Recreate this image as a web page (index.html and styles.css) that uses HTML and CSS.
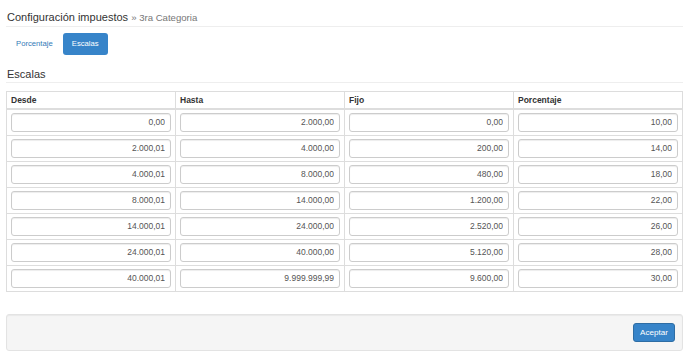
FILE: index.html
```html
<!DOCTYPE html>
<html lang="es">

<head>
    <meta charset="UTF-8" />
    <title>Configuración impuestos</title>
    <link rel="stylesheet" href="styles.css">
</head>

<body>
    <h3 class="page-title">Configuración impuestos <small>» 3ra Categoria</small></h3>

    <ul class="tabs">
        <li><a href="#">Porcentaje</a></li>
        <li class="active"><a href="#">Escalas</a></li>
    </ul>

    <h4 class="section-title">Escalas</h4>

    <table class="scales">
        <thead>
            <tr>
                <th>Desde</th>
                <th>Hasta</th>
                <th>Fijo</th>
                <th>Porcentaje</th>
            </tr>
        </thead>
        <tbody>
            <tr>
                <td><input type="text" value="0,00"></td>
                <td><input type="text" value="2.000,00"></td>
                <td><input type="text" value="0,00"></td>
                <td><input type="text" value="10,00"></td>
            </tr>
            <tr>
                <td><input type="text" value="2.000,01"></td>
                <td><input type="text" value="4.000,00"></td>
                <td><input type="text" value="200,00"></td>
                <td><input type="text" value="14,00"></td>
            </tr>
            <tr>
                <td><input type="text" value="4.000,01"></td>
                <td><input type="text" value="8.000,00"></td>
                <td><input type="text" value="480,00"></td>
                <td><input type="text" value="18,00"></td>
            </tr>
            <tr>
                <td><input type="text" value="8.000,01"></td>
                <td><input type="text" value="14.000,00"></td>
                <td><input type="text" value="1.200,00"></td>
                <td><input type="text" value="22,00"></td>
            </tr>
            <tr>
                <td><input type="text" value="14.000,01"></td>
                <td><input type="text" value="24.000,00"></td>
                <td><input type="text" value="2.520,00"></td>
                <td><input type="text" value="26,00"></td>
            </tr>
            <tr>
                <td><input type="text" value="24.000,01"></td>
                <td><input type="text" value="40.000,00"></td>
                <td><input type="text" value="5.120,00"></td>
                <td><input type="text" value="28,00"></td>
            </tr>
            <tr>
                <td><input type="text" value="40.000,01"></td>
                <td><input type="text" value="9.999.999,99"></td>
                <td><input type="text" value="9.600,00"></td>
                <td><input type="text" value="30,00"></td>
            </tr>
        </tbody>
    </table>

    <div class="well">
        <button class="btn-primary">Aceptar</button>
    </div>
</body>

</html>
```

FILE: styles.css
```css
* {
    box-sizing: border-box;
}

body {
    font-family: 'Liberation Sans', Arial, sans-serif;
    margin: 0;
    padding: 0 5px 0 6px;
    color: #333;
    background: #fff;
}

.page-title {
    margin: 10px 0 0;
    padding: 0 0 1px 1px;
    font-size: 11px;
    line-height: 14px;
    font-weight: normal;
    border-bottom: 1px solid #eee;
}

.page-title small {
    font-size: 9.6px;
    color: #777;
}

.tabs {
    list-style: none;
    display: flex;
    gap: 1px;
    margin: 6px 0 0 1px;
    padding: 0;
}

.tabs a {
    display: block;
    padding: 0 9px;
    line-height: 22px;
    font-size: 7.7px;
    color: #337ab7;
    text-decoration: none;
    border-radius: 3px;
}

.tabs .active a {
    background: #3784c9;
    color: #fff;
}

.section-title {
    margin: 12px 0 0;
    padding: 0 0 1px 1px;
    font-size: 11px;
    line-height: 14px;
    font-weight: normal;
    border-bottom: 1px solid #eee;
}

.scales {
    width: 100%;
    margin-top: 8px;
    border-collapse: collapse;
    table-layout: fixed;
    border: 1px solid #ddd;
}

.scales th {
    height: 17px;
    padding: 0 4px;
    font-size: 8.5px;
    text-align: left;
    border: 1px solid #ddd;
    border-bottom-width: 2px;
}

.scales td {
    padding: 3px 4px;
    border: 1px solid #ddd;
}

.scales input {
    display: block;
    width: 100%;
    height: 19px;
    padding: 0 5px;
    font-family: inherit;
    font-size: 8.5px;
    color: #555;
    text-align: right;
    border: 1px solid #ccc;
    border-radius: 3px;
    box-shadow: inset 0 1px 1px rgba(0, 0, 0, 0.075);
}

.well {
    display: flex;
    justify-content: flex-end;
    margin-top: 22px;
    padding: 8px 7px 8px;
    background: #f5f5f5;
    border: 1px solid #e3e3e3;
    border-radius: 3px;
    box-shadow: inset 0 1px 1px rgba(0, 0, 0, 0.05);
}

.btn-primary {
    height: 19px;
    padding: 0 6px;
    font-family: inherit;
    font-size: 8.1px;
    color: #fff;
    background: #3784c9;
    border: 1px solid #2e6da4;
    border-radius: 3px;
}
```
